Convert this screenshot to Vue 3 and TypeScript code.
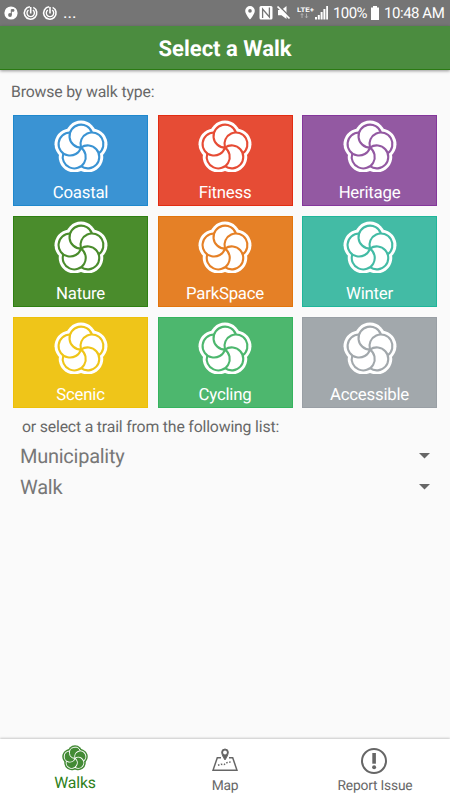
<script setup lang="ts">
interface WalkType {
  name: string
  color: string
  edge: string
}

const walkTypes: WalkType[] = [
  { name: 'Coastal', color: '#3a93d3', edge: '#1f88cd' },
  { name: 'Fitness', color: '#e64c35', edge: '#e22c12' },
  { name: 'Heritage', color: '#9359a2', edge: '#84369b' },
  { name: 'Nature', color: '#4a8c2c', edge: '#2f8012' },
  { name: 'ParkSpace', color: '#e58026', edge: '#e2750c' },
  { name: 'Winter', color: '#43bba5', edge: '#1eb69a' },
  { name: 'Scenic', color: '#efc519', edge: '#edc00a' },
  { name: 'Cycling', color: '#4db76e', edge: '#35b45e' },
  { name: 'Accessible', color: '#a2a8ac', edge: '#999fa5' },
]

const lists: string[] = ['Municipality', 'Walk']
const petals: number[] = [0, 72, 144, 216, 288]
</script>

<template>
  <div class="screen">
    <div class="status">
      <svg class="notices" width="60" height="16" viewBox="0 0 60 16">
        <circle cx="7" cy="8" r="6.6" fill="#fff" />
        <circle cx="6" cy="10" r="1.9" fill="#757575" />
        <path d="M7.3 10V4.6h2.6v1.6H7.3" fill="#757575" stroke="#757575" stroke-width="1" />
        <g v-for="x in [26.7, 46]" :key="x" fill="none" stroke="#fff">
          <path :d="`M${x + 2.6} 2.4a6.2 6.2 0 1 1 -3.4 -.6`" stroke-width="1.6" />
          <path :d="`M${x - 2.2} 5a3.7 3.7 0 1 0 4.4 0`" stroke-width="1.4" />
          <path :d="`M${x} 2v6.5`" stroke-width="1.6" />
        </g>
      </svg>
      <span class="dots">...</span>
      <svg class="signals" width="85" height="16" viewBox="0 0 85 16">
        <path d="M6 1a4.8 4.8 0 0 0-4.8 4.8C1.2 9.3 6 14.6 6 14.6s4.8-5.3 4.8-8.8A4.8 4.8 0 0 0 6 1zm0 3.1a1.8 1.8 0 1 1 0 3.6a1.8 1.8 0 0 1 0-3.6z" fill="#fff" fill-rule="evenodd" />
        <rect x="15.5" y="1" width="13" height="13.5" rx="1.5" fill="#fff" />
        <path d="M18.6 13V4l6.8 8V2.5" fill="none" stroke="#757575" stroke-width="1.3" />
        <path d="M34 5h3.5l5-4v13l-5-3.8h-3.5z" fill="#fff" />
        <path d="M34.5 .5l12 12" stroke="#757575" stroke-width="1.5" />
        <path d="M33.500 1.5l12 12" stroke="#fff" stroke-width="1.7" />
        <text x="53" y="6.5" class="lte" textLength="17" lengthAdjust="spacingAndGlyphs">LTE+</text>
        <path d="M58 13V8.5m-1.3 1.6L58 8.6l1.3 1.5M62.5 8.5V13m-1.3-1.6l1.3 1.5l1.3-1.5" fill="none" stroke="#b5b5b5" stroke-width=".9" />
        <path d="M71 14.5v-2.5h2v2.5zM73.8 14.5V10h2v4.5zM76.6 14.5V7h2v7.5zM79.4 14.5V4h2v10.5zM82.2 14.5V1h1.8v13.5z" fill="#fff" />
      </svg>
      <span class="percent">100%</span>
      <svg class="battery" width="8" height="14" viewBox="0 0 8 14">
        <path d="M2 0h4v1.5h2V14H0V1.5h2z" fill="#fff" />
      </svg>
      <span class="time">10:48 AM</span>
    </div>

    <header class="bar">Select a Walk</header>

    <main class="content">
      <p class="browse">Browse by walk type:</p>
      <div class="grid">
        <button
          v-for="w in walkTypes"
          :key="w.name"
          class="tile"
          :style="{ '--tile': w.color, '--edge': w.edge }"
        >
          <svg class="flower" width="54" height="52" viewBox="-27 -27.6 54 52">
            <g class="halo">
              <circle v-for="a in petals" :key="a" cy="-11.5" r="15.5" :transform="`rotate(${a})`" />
            </g>
            <g class="petals">
              <path v-for="a in petals" :key="a" d="M0 0A11.5 11.5 0 1 1 10.94 -15.05" :transform="`rotate(${a})`" />
            </g>
          </svg>
          <span class="label">{{ w.name }}</span>
        </button>
      </div>
      <p class="or">or select a trail from the following list:</p>
      <div v-for="l in lists" :key="l" class="select">
        <span>{{ l }}</span>
        <svg width="11" height="6" viewBox="0 0 11 6"><path d="M0 0h11L5.5 5.5z" fill="#666" /></svg>
      </div>
    </main>

    <nav class="tabs">
      <div class="tab active">
        <svg class="flower" width="26" height="26" viewBox="-27 -27.6 54 54">
          <g class="halo">
            <circle v-for="a in petals" :key="a" cy="-11.5" r="15.5" :transform="`rotate(${a})`" />
          </g>
          <g class="petals">
            <path v-for="a in petals" :key="a" d="M0 0A11.5 11.5 0 1 1 10.94 -15.05" :transform="`rotate(${a})`" />
          </g>
        </svg>
        <span>Walks</span>
      </div>
      <div class="tab">
        <svg width="26" height="24" viewBox="0 0 26 24" fill="none" stroke="#666">
          <path d="M9 9.7H5.3L1 22.3h24L20.7 9.7H17" stroke-width="1.5" />
          <path d="M13 1a3.3 3.3 0 0 0-3.3 3.3C9.7 7 13 12 13 12s3.3-5 3.3-7.7A3.3 3.3 0 0 0 13 1z" fill="#666" stroke-width="1" />
          <circle cx="13" cy="4.5" r="1.9" fill="#fff" stroke="none" />
          <path d="M6 17.3l3-1l3 .3l3-2l5-1" stroke-width="1.5" stroke-dasharray="1.5 1.5" />
        </svg>
        <span>Map</span>
      </div>
      <div class="tab report">
        <svg width="26" height="26" viewBox="0 0 26 26">
          <circle cx="13" cy="13" r="12" fill="none" stroke="#666" stroke-width="2" />
          <path d="M11.3 5h3.6v10.7h-3.6z" fill="#666" />
          <circle cx="13.1" cy="19.3" r="2" fill="#666" />
        </svg>
        <span>Report Issue</span>
      </div>
    </nav>
  </div>
</template>

<style>
body {
  margin: 0;
}
</style>

<style scoped>
.screen {
  width: 450px;
  height: 800px;
  display: flex;
  flex-direction: column;
  background: #fafafa;
  font-family: Roboto, sans-serif;
  color: #686868;
  overflow: hidden;
  text-rendering: geometricPrecision;
}
.status {
  height: 26px;
  flex: none;
  box-sizing: border-box;
  display: flex;
  align-items: center;
  padding: 0 6px 0 4px;
  background: #757575;
  color: #fff;
  font-size: 15px;
  line-height: 28px;
  white-space: nowrap;
}
.dots {
  margin-left: -1px;
  font-size: 17px;
  line-height: 26px;
}
.signals {
  margin-left: auto;
}
.lte {
  font-size: 6.5px;
  font-weight: 700;
  fill: #fff;
}
.percent {
  margin-left: 4px;
  width: 34px;
  font-size: 15px;
  letter-spacing: -0.6px;
}
.battery {
  margin: 0 5px 0 4px;
}
.time {
  width: 60px;
  font-size: 15px;
  letter-spacing: -0.45px;
}
.bar {
  height: 44px;
  flex: none;
  box-sizing: border-box;
  border-bottom: 1px solid #2a7a12;
  background: #4b8c3f;
  box-shadow: 0 1px 3px rgba(0, 0, 0, 0.4);
  color: #fff;
  font-size: 22px;
  font-weight: 700;
  line-height: 47px;
  text-align: center;
}
.content {
  flex: 1;
}
p {
  margin: 0;
}
.browse {
  padding: 12px 0 0 11px;
  height: 33px;
  font-size: 15.8px;
  letter-spacing: -0.16px;
  line-height: 20px;
}
.grid {
  display: grid;
  grid-template-columns: repeat(3, 135px);
  grid-auto-rows: 91px;
  gap: 10px 9.5px;
  padding-left: 13px;
}
.tile {
  box-sizing: border-box;
  border: 1px solid var(--edge);
  background: var(--tile);
  color: #fff;
  padding: 4px 0 0;
  display: flex;
  flex-direction: column;
  align-items: center;
  justify-content: flex-start;
  font: 16.8px/20px Roboto, sans-serif;
  letter-spacing: -0.23px;
  text-rendering: geometricPrecision;
}
.flower {
  flex: none;
}
.halo {
  fill: #fff;
}
.petals {
  fill: none;
  stroke: var(--tile);
  stroke-width: 2.1;
}
.label {
  margin-top: 11px;
}
.or {
  padding: 9px 0 0 22px;
  height: 23px;
  font-size: 15.8px;
  letter-spacing: -0.17px;
  line-height: 20px;
}
.select {
  height: 31.5px;
  display: flex;
  align-items: center;
  justify-content: space-between;
  padding: 0 20px 0 20px;
  font-size: 20px;
  letter-spacing: -0.26px;
  color: #777;
}
.tabs {
  height: 61px;
  flex: none;
  display: grid;
  grid-template-columns: repeat(3, 1fr);
  background: #fff;
  box-shadow: 0 -1px 2px rgba(0, 0, 0, 0.2);
}
.tab {
  display: flex;
  flex-direction: column;
  align-items: center;
  padding-top: 9px;
  font-size: 13.8px;
  letter-spacing: -0.2px;
  line-height: 16px;
}
.tab span {
  margin-top: 6px;
}
.report {
  padding: 9px 2px 0 0;
}
.report span {
  margin: 4px -2px 0 0;
}
.active {
  padding-top: 6px;
  color: #2d8019;
  font-size: 15.8px;
}
.active span {
  margin-top: 4px;
}
.active .halo {
  fill: #438b35;
}
.active .petals {
  stroke: #fff;
  stroke-width: 2;
}
</style>
